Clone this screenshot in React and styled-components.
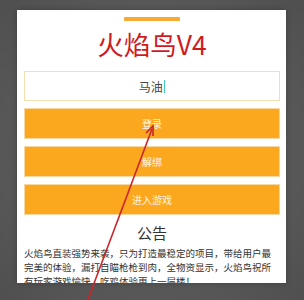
import React from "react";
import styled, { createGlobalStyle } from "styled-components";

const Global = createGlobalStyle`
  html, body { margin: 0; padding: 0; background: #5a5a5a; }
  body { font-family: "Noto Sans CJK SC", "Noto Sans", sans-serif; }
`;

const Screen = styled.div`
  position: relative;
  width: 304px;
  height: 300px;
  overflow: hidden;
  background: radial-gradient(circle at 50% 50%, #606060 0%, #575757 70%, #4f4f4f 100%);
  padding-top: 10px;
  box-sizing: border-box;
`;

const Card = styled.div`
  width: 269px;
  height: 273px;
  margin-left: 17px;
  background: #ffffff;
  box-sizing: border-box;
  padding: 0 6px 0 7px;
  overflow: hidden;
  display: flow-root;
  box-shadow: 0 0 6px rgba(0, 0, 0, 0.25);
`;

const TopBar = styled.div`
  width: 56px;
  height: 4px;
  margin: 7px auto 0;
  background: #f5ab31;
  border-radius: 1px;
`;

const Title = styled.h1`
  margin: 0 0 4px;
  font-size: 26.5px;
  line-height: 46px;
  font-weight: 400;
  text-align: center;
  color: #cf1b1e;
`;

const Input = styled.div`
  height: 30px;
  box-sizing: border-box;
  border: 1px solid #f4dfae;
  display: flex;
  align-items: center;
  justify-content: center;
  font-size: 12px;
  color: #444;
`;

const Caret = styled.span`
  display: inline-block;
  width: 1.5px;
  height: 13px;
  margin-left: 1px;
  background: #49c9c4;
`;

const Button = styled.div`
  height: 31px;
  margin-top: 7px;
  box-sizing: border-box;
  background: #fca81e;
  border: 1px solid #f8d8a0;
  display: flex;
  align-items: center;
  justify-content: center;
  font-size: 10px;
  color: #fff6e6;
`;

const Heading = styled.div`
  margin-top: 7px;
  font-size: 15px;
  line-height: 22px;
  text-align: center;
  color: #333;
`;

const Paragraph = styled.p`
  margin: 2px 0 0;
  width: 252px;
  font-size: 9.5px;
  line-height: 14px;
  color: #333;
`;

const Arrow = styled.svg`
  position: absolute;
  left: 0;
  top: 0;
  pointer-events: none;
`;

export default function App() {
  return (
    <>
      <Global />
      <Screen>
        <Card>
          <TopBar />
          <Title>火焰鸟V4</Title>
          <Input>
            马油<Caret />
          </Input>
          <Button>登录</Button>
          <Button>解绑</Button>
          <Button>进入游戏</Button>
          <Heading>公告</Heading>
          <Paragraph>
            火焰鸟直装强势来袭，只为打造最稳定的项目，带给用户最完美的体验，漏打自瞄枪枪到肉，全物资显示，火焰鸟祝所有玩家游戏愉快，吃鸡体验更上一层楼！
          </Paragraph>
        </Card>
        <Arrow width="304" height="300" viewBox="0 0 304 300">
          <line x1="87" y1="302" x2="152" y2="129" stroke="#c8262a" strokeWidth="1.6" />
          <polyline points="146,133 153,126 153,136" fill="none" stroke="#c8262a" strokeWidth="1.6" />
        </Arrow>
      </Screen>
    </>
  );
}
